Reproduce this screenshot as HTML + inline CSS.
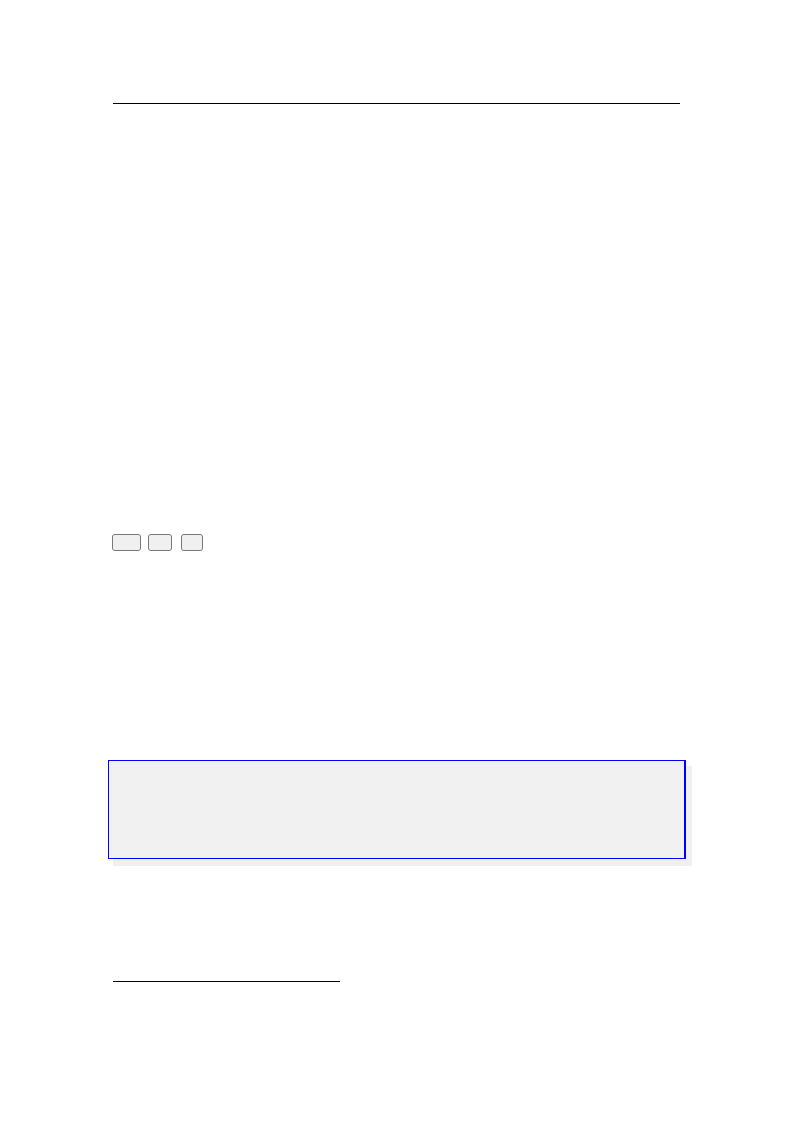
<!DOCTYPE html>
<html><head><style>
body{margin:0;background:#fff;width:795px;height:1124px;position:relative;overflow:hidden;font-family:"Liberation Sans",sans-serif}
.a{position:absolute}
.btn{position:absolute;top:534px;height:17px;background:#f0f0f0;border:1px solid #777;border-radius:3px;box-sizing:border-box}
</style></head><body>
<div class="a" style="left:113px;top:103px;width:567px;height:1px;background:#000"></div>
<div class="btn" style="left:112px;width:29px"></div>
<div class="btn" style="left:148px;width:24px"></div>
<div class="btn" style="left:181px;width:22px"></div>
<div class="a" style="left:113px;top:766px;width:579px;height:100px;background:#f0f0f0"></div>
<div class="a" style="left:108px;top:760px;width:578px;height:99px;background:#f1f1f1;border:1px solid #00f;border-right-width:2px;box-sizing:border-box"></div>
<div class="a" style="left:113px;top:981px;width:227px;height:1px;background:#000"></div>
</body></html>
